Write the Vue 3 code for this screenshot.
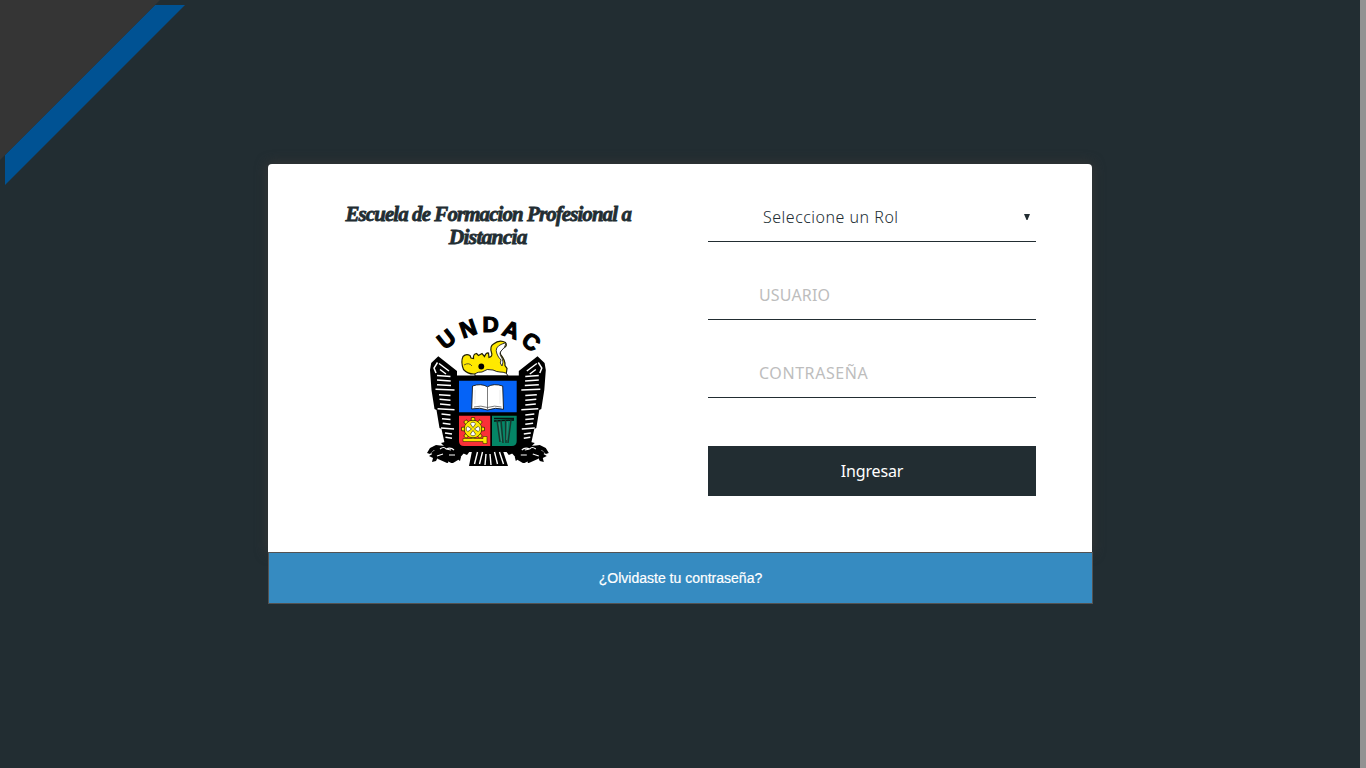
<script setup>
import { ref } from 'vue'

const role = ref('Seleccione un Rol')
const letters = [
  { c: 'U', x: 19.3, y: 23, a: -38 },
  { c: 'N', x: 41, y: 12.3, a: -19 },
  { c: 'D', x: 63.7, y: 8.4, a: 0 },
  { c: 'A', x: 84.3, y: 13.5, a: 19 },
  { c: 'C', x: 104.3, y: 25.5, a: 37 }
]
// White gaps between the feathers of one wing: [outer x, inner x, y]
const feathers = [
  [10, 23.5, 59.5], [10, 23.7, 64], [10, 24, 68.7], [8.5, 27.5, 73.2],
  [12, 23.5, 78.7], [12.5, 23.5, 83.3], [13, 23.5, 88], [10.5, 27.5, 92.8],
  [14.5, 23.5, 98], [15, 23.5, 102.7], [15.7, 23.5, 107.3], [14, 27, 112],
  [18, 25, 117], [18.5, 25, 121.3]
]
const teeth = [0, 45, 90, 135, 180, 225, 270, 315]
</script>

<template>
  <main class="page">
    <svg class="ribbon" width="190" height="190" viewBox="0 0 190 190" aria-hidden="true">
      <path d="M155 5h30L5 185v-30z" fill="#005293" />
      <path d="M0 0h160L0 160z" fill="#353535" />
    </svg>

    <section class="card">
      <div class="content">
        <div class="brand">
          <h1><span class="line first">Escuela de Formacion Profesional a</span><span class="line second">Distancia</span></h1>
          <svg class="emblem" width="122" height="150" viewBox="0 0 122 150" role="img" aria-label="UNDAC">
            <text
              v-for="l in letters" :key="l.c" class="letter" text-anchor="middle"
              :transform="`translate(${l.x} ${l.y}) rotate(${l.a})`" y="8"
            >{{ l.c }}</text>

            <g v-for="side in 2" :key="side" :transform="side === 2 ? 'translate(121.8 0) scale(-1 1)' : undefined">
              <path d="M11.300 40.300 30 55v78h-6l-6-4-3.500-16-2-1-3-18-2-1-3-19L3 54l1.200-7z" />
              <path d="M10.500 46.500 7 52l2 5M12 47.500l10 7.500M13 53.500l6 4.500" fill="none" stroke="#fff" stroke-width="1.500" />
              <path
                v-for="f in feathers" :key="f[2]" :d="`M${f[0]} ${f[2]}L${f[1]} ${f[2] + 0.9}`"
                stroke="#fff" stroke-width="1.500"
              />
              <path d="M18 126q9-1 14 2l11 7-3 4-7-3-3 2 4 3-1 4-4-3-3 4-5 1-2-4 4-2-4-2-3 3-5-1-2 4-4 1 1-4-4-2 5-3 6-1-6-2-4 4-3-1 3-5 6-3 8 1-3-3z" />
              <path d="m4 137 9-7 14-1 10 8-6 7-5 3-6 0-9-4z" />
              <path d="M13 133q4-3 6 0m-9 7 6-2m3-5 5 1m-2 5 6 0m-9-6q5-2 8 1m-6 12 4 2" fill="none" stroke="#fff" stroke-width="1.150" />
            </g>

            <path d="M28 60h66v72l-8 4H36l-8-5z" />
            <path d="M32 64.700h57.700v31.600H32z" fill="#0563f7" />
            <path d="M32 99.700h31.300V130H37q-5 0-5-5z" fill="#fa3038" />
            <path d="M65 99.700h24.700V125q0 5-5 5H65z" fill="#048566" />

            <path d="M45.500 70 44.700 93q8-2 15.800 1 8-3 16-.7L75.700 70q-9-3-15.200.8Q54 67 45.500 70z" fill="#fff" stroke="#161616" stroke-width=".9" />
            <path d="M60.500 71v22.500M47 91q7-2 13.500.5 7-2.500 14-.5" fill="none" stroke="#444" stroke-width=".7" />
            <path d="M48 74v14M73 74v14" stroke="#ddd" stroke-width=".6" />

            <g transform="translate(46 113)">
              <g fill="#ffe900" stroke="#151500" stroke-width=".65">
                <path v-for="t in teeth" :key="t" :transform="`rotate(${t})`" d="M-2-8-1.600-11.500h3.200L2-8z" />
                <circle r="8.700" />
              </g>
              <circle r="8" fill="#ffe900" />
              <path v-for="t in 4" :key="t" :transform="`rotate(${t * 90})`" d="M0-1.500-2.600-5.200Q0-8.500 2.600-5.200z" fill="#fff" stroke="#222" stroke-width=".6" />
            </g>
            <path d="M36 122.500h20v-2h4v7h-4v-2H36z" fill="#ffe900" stroke="#3b3000" stroke-width=".6" />
            <path d="M67 102.500h20M67 105l20-1" stroke="#07120f" stroke-width="1.300" fill="none" />
            <path d="m70 104 3 22M74 104l2 23M78.500 104l.5 23M84 104l-3 23" stroke="#17382e" stroke-width="1.500" fill="none" />
            <path d="m72 107 2.500 18m6-19-1 18" stroke="#6b9186" stroke-width=".5" fill="none" />

            <path d="M36.500 53.500Q33.500 46 36 40.500 39 37.500 43 39.500L44 42l2.500.5Q46 38 49.500 37.500l2 2 3.500-2 2.500 3Q59 36.500 61.500 37L62 41.500q4-1 2.500-5-2-6 2-8.500 6-5 12-1.500 2 3-1 5-5 2-4 7 5 6 4.500 11l2 3-1 7H56l-5-2q-9 2-14.500-4z" fill="#ffe900" stroke="#222000" stroke-width="1.200" />
            <path d="M70 38q-3-7 5-10 3-1 4-1-1 5-4 7-4 3 0 8 2 4 0 8-3-3-1-6-3-3-4-6z" fill="#fff" stroke="#222" stroke-width=".9" />
            <circle cx="54.300" cy="50.500" r="2.900" />
            <path d="M37 49q5-3 8 1" stroke="#333" fill="none" stroke-width=".8" />
            <path d="M48 60q-1-4 7-4 5-4 11-2 4 2 7 2 7 0 8 4z" fill="#fff" stroke="#111" stroke-width=".9" />
            <path d="M28 59.600h66v3H28z" />

            <path d="M45 135h31l5 15H42z" />
            <path d="m50.500 136-3 12m8-12-3 12m15-12 3 12m2-12 4 12M59 138l-1 11m5-11 1 11" stroke="#fff" stroke-width="1.400" />
          </svg>
        </div>

        <form class="login" @submit.prevent>
          <div class="field select"><span>{{ role }}</span>
            <svg width="6" height="6" viewBox="0 0 6 6" aria-hidden="true"><path d="M0 0h6L3.500 6h-1z" fill="#222d32" /></svg>
          </div>
          <div class="field"><span class="user">USUARIO</span></div>
          <div class="field"><span class="pass">CONTRASEÑA</span></div>
          <button type="submit">Ingresar</button>
        </form>
      </div>
      <a class="forgot"><span>¿Olvidaste tu contraseña?</span></a>
    </section>
    <div class="scrollbar"></div>
  </main>
</template>

<style>
body { margin: 0; }
</style>

<style scoped>
* { box-sizing: border-box; }
.page {
  position: relative;
  height: 768px;
  overflow: hidden;
  padding: 164px 0 0 268px;
  background: #222d32;
}
.ribbon { position: absolute; left: 0; top: 0; }
.scrollbar { position: absolute; right: 0; top: 0; width: 6px; height: 100%; background: #929292; }
.card {
  width: 824px;
  height: 388px;
  border-radius: 4px 4px 0 0;
  background: #fff;
  box-shadow: 0 0 12px 1px #353535;
}
.content { display: flex; height: 388px; }
.brand { width: 440px; display: flex; flex-direction: column; align-items: center; }
h1 {
  margin: 38px 0 0;
  height: 46px;
  color: #222d32;
  font: italic bold 22px/23px "Liberation Serif", serif;
  -webkit-text-stroke: .8px #222d32;
}
.line { display: block; width: max-content; margin: 0 auto; white-space: nowrap; }
.first { letter-spacing: -.94px; transform: scaleX(.95); }
.second { letter-spacing: -.8px; transform: scaleX(.98); }
.emblem { display: block; margin-top: 68px; overflow: visible; }
.letter { font: bold 22.5px "Liberation Sans", sans-serif; stroke: #000; stroke-width: 1.2px; }
.login { width: 328px; padding-top: 28px; }
.field {
  display: flex;
  align-items: center;
  height: 50px;
  margin-bottom: 28px;
  padding-left: 51px;
  border-bottom: 1px solid #222d32;
  color: #bdbdbd;
  font: 16px/24px "Noto Sans", sans-serif;
}
.select { justify-content: space-between; padding: 0 6px 0 55px; color: #222d32; }
.select span { font-weight: 300; letter-spacing: .5px; }
.user { letter-spacing: .15px; }
.pass { letter-spacing: .57px; }
button {
  display: block;
  width: 328px;
  height: 50px;
  margin-top: 48px;
  padding: 0;
  border: 0;
  background: #222d32;
  color: #fff;
  font: 16px "Noto Sans", sans-serif;
  letter-spacing: -.15px;
}
.forgot {
  display: flex;
  align-items: center;
  justify-content: center;
  width: 825px;
  height: 52px;
  border: 1px solid #535353;
  background: #368bc1;
  color: #fff;
  font: 14px/20px "Liberation Sans", sans-serif;
  -webkit-text-stroke: .2px #fff;
}
</style>
